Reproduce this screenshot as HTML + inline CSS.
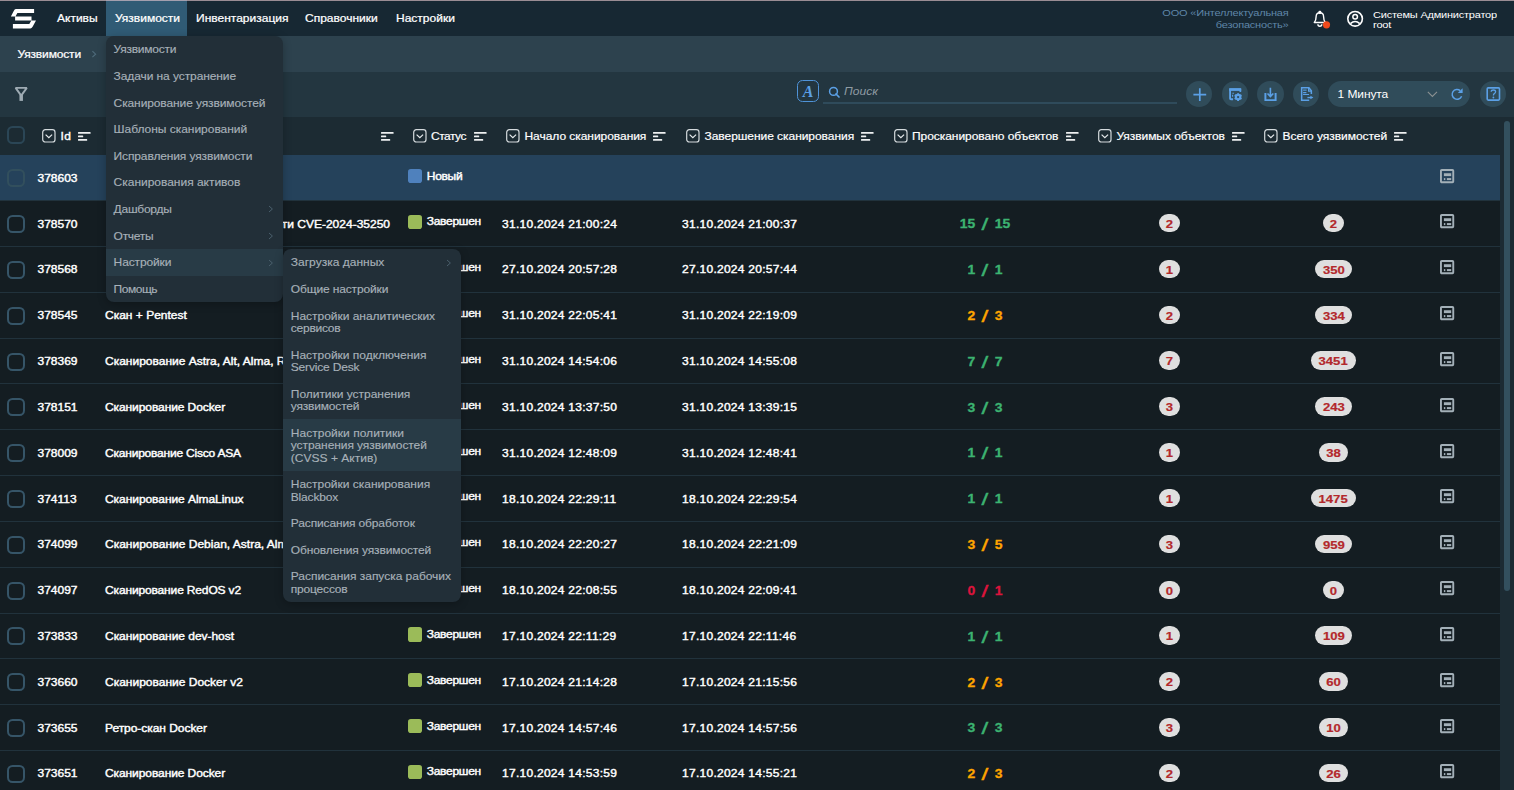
<!DOCTYPE html>
<html lang="ru"><head><meta charset="utf-8"><title>Сканирование уязвимостей</title>
<style>
*{box-sizing:border-box;margin:0;padding:0}
html,body{width:1514px;height:790px;overflow:hidden;background:#141d22;font-family:"Liberation Sans",sans-serif;color:#fff}
body{position:relative}
.abs{position:absolute}
#topline{position:absolute;left:0;top:0;width:1514px;height:1px;background:linear-gradient(to right,#9a8d94 0,#9a8d94 106px,#a39fae 106px,#a39fae 187px,#9a8d94 187px)}
#nav{position:absolute;left:0;top:1px;width:1514px;height:35px;background:#172833}
#nav .tab{position:absolute;top:0;height:35px;line-height:35px;font-size:12px;-webkit-text-stroke:.25px #fff;color:#fff;white-space:nowrap}
.t{display:inline-block;position:relative;top:1.2px;transform:scaleY(.84)}
#nav .act{background:#305b75}
#crumb{position:absolute;left:0;top:36px;width:1514px;height:36px;background:#2d424e}
#tool{position:absolute;left:0;top:72px;width:1514px;height:45px;background:#233640}
#thead{z-index:2;position:absolute;left:0;top:117px;width:1500px;height:38px;background:#1c2b33}
#sbtrack{position:absolute;left:1500px;top:117px;width:14px;height:673px;background:#1c2b33}
#sbthumb{position:absolute;left:1503.9px;top:120.9px;width:6.5px;height:469.8px;border-radius:3.3px;background:#33505e}
.hc{position:absolute;top:1px;height:38px;line-height:38px;font-size:12px;color:#fff;white-space:nowrap;-webkit-text-stroke:.2px;letter-spacing:-.05px;transform:scaleY(.84)}
.cb{position:absolute;left:7px;width:18px;height:18px;border:2px solid #365568;border-radius:5.5px}
.row{position:absolute;left:0;width:1500px;height:45.83px;border-top:1px solid #21323c;background:#141d22;font-size:12px;font-weight:normal;-webkit-text-stroke:0.45px}
.row.sel{background:#25425b;border-top-color:#25425b}
.row .cb{top:13.9px}
.row.sel .cb{border-color:#324f5d}
.row span{position:absolute;white-space:nowrap}
.row .id{left:37.5px;top:15.4px;line-height:16px;transform:scaleY(.84)}
.row .nm{left:105px;top:15.4px;line-height:16px;transform:scaleY(.84)}
.row .nmr{left:auto;right:1110px}
.row .sq{left:407.9px;top:13.8px;width:14.2px;height:14.2px;border-radius:2.8px;background:#9bbb59}
.row .sqn{background:#4f81bd}
.row .st{left:426.8px;top:13.3px;line-height:16px;letter-spacing:-.3px;transform:scaleY(.84)}
.row .d1{left:502px;top:15.4px;line-height:16px;letter-spacing:.27px;transform:scaleY(.84)}
.row .d2{left:682px;top:15.4px;line-height:16px;letter-spacing:.27px;transform:scaleY(.84)}
.row .ps{font-weight:bold;-webkit-text-stroke:.3px;left:884.8px;width:200px;text-align:center;top:14.2px;line-height:18px;font-size:13px;letter-spacing:0;word-spacing:3.7px;transform:scaleX(1.07)}
.g{color:#3cb371}.o{color:#ffa500}.r{color:#dc143c}
.row .bw{top:12.75px;height:19px;width:100px;text-align:center}
.row .b1{left:1119.5px}
.row .b2{left:1283.5px}
.row .bd{font-weight:bold;-webkit-text-stroke:.2px;position:static;display:inline-block;height:18.6px;width:21.8px;text-align:center;border-radius:10px;background:#dfdfdf;color:#b3282b;font-size:11.8px;line-height:20.6px;vertical-align:top}
.row .w2{width:29.6px}.row .w3{width:36.7px}.row .w4{width:44.2px}
.row .bd i{font-style:normal;display:inline-block;transform:scaleX(1.11)}
.row .ri{position:absolute;left:1439.1px;top:12.3px}
.menu{z-index:5;position:absolute;background:#222f38;color:#a7b1b8;font-size:12px;-webkit-text-stroke:.15px;box-shadow:0 2px 8px rgba(0,0,0,.25)}
.menu .it{position:relative;display:flex;flex-direction:column;justify-content:center;min-height:26.65px;padding:7px 8px 7px 7.6px;line-height:12.5px;white-space:nowrap}
.menu .it span{display:block;position:relative;top:1.2px;height:12.5px;transform:scaleY(.84)}
.menu .hov{background:#283b46}
.menu .chev{position:absolute;right:8.8px;top:9.6px}
.btn{top:8.6px;width:26.3px;height:26.3px;border-radius:13.2px;background:#304c5a}
.ln{display:block;transform:scaleY(.84)}
.row .ps b{display:inline-block;font-weight:normal;-webkit-text-stroke:.3px;transform:translateY(.6px) scale(1.75,1.33)}

</style></head>
<body>
<div id="topline"></div>
<div id="nav">
<svg class="abs" style="left:0;top:0" width="46" height="35" viewBox="0 0 46 35"><path d="M15.9 8.1 H34.1 V11.9 H17.4 L15.4 15.5 H10.9 L13.6 10.2 Q14.6 8.1 15.9 8.1 Z M15.1 15.5 H31.5 V19.6 H15.1 Z M12.9 22.9 H29.3 L31.4 19.6 H36 L32.6 25.8 Q31.6 27.5 30.3 27.5 H12.9 Z" fill="#fff"/></svg>
<div class="tab" style="left:57px"><span class="t">Активы</span></div>
<div class="tab act" style="left:106px;width:81px;padding-left:9px"><span class="t">Уязвимости</span></div>
<div class="tab" style="left:196px"><span class="t">Инвентаризация</span></div>
<div class="tab" style="left:305px"><span class="t">Справочники</span></div>
<div class="tab" style="left:396px"><span class="t">Настройки</span></div>
<div class="abs" style="right:225.5px;top:7px;text-align:right;font-size:11px;line-height:11.6px;color:#5f86a8;letter-spacing:-.2px;white-space:nowrap"><span class="ln">ООО «Интеллектуальная</span><span class="ln">безопасность»</span></div>
<svg class="abs" style="left:1305px;top:0" width="65" height="35" viewBox="0 0 65 35"><rect x="13.4" y="9.7" width="2.9" height="3.2" rx="1.2" fill="#fff"/><path d="M9.3 21.5 C10.7 20 11.1 18.6 11.1 15.8 C11.1 13.2 12.5 11.8 14.85 11.8 C17.2 11.8 18.6 13.2 18.6 15.8 C18.6 18.6 19 20 20.4 21.5 Z" fill="none" stroke="#fff" stroke-width="1.4" stroke-linejoin="round"/><path d="M12.9 23.3 A1.95 1.95 0 0 0 16.8 23.3" fill="none" stroke="#fff" stroke-width="1.4"/><circle cx="21.5" cy="23.8" r="3.6" fill="#f04a1c"/><circle cx="50.1" cy="17.8" r="7.3" fill="none" stroke="#fff" stroke-width="1.6"/><circle cx="50.15" cy="15.7" r="2.3" fill="none" stroke="#fff" stroke-width="1.5"/><path d="M45.4 22.7 Q50.1 18.3 54.8 22.7" fill="none" stroke="#fff" stroke-width="1.6"/></svg>
<div class="abs" style="left:1373px;top:8.5px;font-size:11px;line-height:10px;color:#fff;letter-spacing:-.22px;white-space:nowrap"><span class="ln">Системы Администратор</span><span class="ln">root</span></div>
</div>
<div id="crumb">
<div class="abs" style="left:17.5px;top:1px;line-height:36px;font-size:12px;color:#fff;letter-spacing:-.15px;-webkit-text-stroke:.25px #fff;transform:scaleY(.84)">Уязвимости</div>
<svg class="abs" style="left:91px;top:14px" width="6" height="9" viewBox="0 0 6 9"><path d="M1.4 1.2 L4.6 4.2 L1.4 7.2" fill="none" stroke="#4f6b7b" stroke-width="1.1"/></svg>
</div>
<div id="tool">
<svg class="abs" style="left:13px;top:14px" width="17" height="17" viewBox="0 0 17 17"><path d="M2.6 1.9 H13.8 L8.2 9.6 Z" fill="none" stroke="#9eabb3" stroke-width="1.9" stroke-linejoin="bevel"/><rect x="6.45" y="8.6" width="3.5" height="6.3" fill="#9eabb3"/></svg>
<div class="abs" style="left:797px;top:8px;width:22px;height:22px;border:1.6px solid #4f93d8;border-radius:5.5px;font-family:'Liberation Serif',serif;font-style:italic;font-weight:bold;font-size:16px;line-height:21.6px;text-align:center;color:#5ba0e6">A</div>
<svg class="abs" style="left:828px;top:14px" width="13" height="13" viewBox="0 0 13 13"><circle cx="5.5" cy="5.4" r="3.9" fill="none" stroke="#5ba0e6" stroke-width="1.5"/><path d="M8 8 L11 11" stroke="#5ba0e6" stroke-width="1.7" stroke-linecap="round"/></svg>
<div class="abs" style="left:844px;top:12px;font-size:12px;line-height:14px;font-style:italic;color:#8f9ba3;letter-spacing:.05px;transform:scaleY(.84);transform-origin:50% 78%">Поиск</div>
<div class="abs" style="left:823px;top:30px;width:354px;height:1.5px;background:#2f4b5b"></div>
<div class="abs btn" style="left:1186.2px"></div>
<div class="abs btn" style="left:1221.9px"></div>
<div class="abs btn" style="left:1257.4px"></div>
<div class="abs btn" style="left:1293px"></div>
<div class="abs" style="left:1328.3px;top:8.6px;width:141.5px;height:26.3px;border-radius:13.2px;background:#304c5a"></div>
<div class="abs btn" style="left:1479.6px"></div>

<svg class="abs" style="left:1186px;top:9px" width="27" height="27" viewBox="0 0 27 27"><path d="M7.4 13.6 H20.2 M13.8 7.2 V20" stroke="#5ba0e6" stroke-width="1.7" fill="none"/></svg>
<svg class="abs" style="left:1222px;top:9px" width="27" height="27" viewBox="0 0 27 27"><path d="M11.1 18.2 H8.9 Q8.1 18.2 8.1 17.4 V8" fill="none" stroke="#5ba0e6" stroke-width="1.9"/><path d="M7.15 8.5 H19.2" stroke="#5ba0e6" stroke-width="2.8"/><path d="M18.35 8 V11" stroke="#5ba0e6" stroke-width="1.7"/><path d="M10.4 12.2 h1.5 M10.6 13.8 v2" stroke="#5ba0e6" stroke-width="1.1"/><g transform="translate(16.1,16.1)"><circle r="2.3" fill="none" stroke="#5ba0e6" stroke-width="2"/><path d="M0 -3.9 V3.9 M-3.38 -1.95 L3.38 1.95 M-3.38 1.95 L3.38 -1.95" stroke="#5ba0e6" stroke-width="1.9"/><circle r="1.15" fill="#304c5a"/></g></svg>
<svg class="abs" style="left:1257px;top:9px" width="27" height="27" viewBox="0 0 27 27"><path d="M8.4 11.9 V19.1 H18.6 V11.9" fill="none" stroke="#5ba0e6" stroke-width="1.95"/><path d="M13.4 6.85 V15 M10.5 12.5 L13.4 15.5 L16.3 12.5" fill="none" stroke="#5ba0e6" stroke-width="1.6"/></svg>
<svg class="abs" style="left:1293px;top:9px" width="27" height="27" viewBox="0 0 27 27"><path d="M16.2 19.15 H8.65 V6.7 H15.9 L18.35 9.8 V12.9" fill="none" stroke="#5ba0e6" stroke-width="1.5" stroke-linejoin="miter"/><path d="M15.6 6.9 V10.2 H18.3" fill="none" stroke="#5ba0e6" stroke-width="1.2"/><path d="M10.1 8.4 h3.5 v1.5 h-3.5z" fill="#5ba0e6" opacity=".75"/><path d="M10.1 11.6 h3.3 M10.1 13.5 h5.9" stroke="#5ba0e6" stroke-width="1.1"/><path d="M14.4 16.57 H18" stroke="#5ba0e6" stroke-width="1.3"/><path d="M17.4 14.8 L20.4 16.57 L17.4 18.3 Z" fill="#5ba0e6"/></svg>
<svg class="abs" style="left:1426px;top:18.2px" width="13" height="9" viewBox="0 0 13 9"><path d="M1.8 1.8 L6.4 6.4 L11 1.8" fill="none" stroke="#8b9192" stroke-width="1.1"/></svg>
<svg class="abs" style="left:1449px;top:14.1px" width="16" height="16" viewBox="0 0 16 16"><path d="M11.2 4.6 A4.9 4.9 0 1 0 12.6 10.2" fill="none" stroke="#5ba0e6" stroke-width="1.5"/><path d="M13.6 2.2 V7 H8.8 Z" fill="#5ba0e6"/></svg>
<svg class="abs" style="left:1479.5px;top:9px" width="27" height="27" viewBox="0 0 27 27"><rect x="7.2" y="6.9" width="12.3" height="12.2" rx="1" fill="none" stroke="#5ba0e6" stroke-width="1.6"/><path d="M11.2 10.8 Q11.2 9 13.4 9 Q15.6 9 15.6 10.8 Q15.6 11.9 14.3 12.6 Q13.4 13.1 13.4 14.4" fill="none" stroke="#5ba0e6" stroke-width="1.3"/><circle cx="13.4" cy="16.5" r=".9" fill="#5ba0e6"/></svg>
<div class="abs" style="left:1337.6px;top:15.1px;font-size:12px;line-height:16px;color:#fff;letter-spacing:-.1px;transform:scaleY(.84)">1 Минута</div>
</div>
<div id="thead">
<span class="cb" style="top:9px;border-color:#2b4656"></span>
<svg class="abs" style="left:42px;top:12px" width="14" height="14" viewBox="0 0 14 14"><rect x="0.7" y="0.7" width="12.3" height="12.3" rx="2.6" fill="none" stroke="#d4dadd" stroke-width="1.2"/><path d="M3.6 5.6 L6.85 8.7 L10.1 5.6" fill="none" stroke="#e8ecee" stroke-width="1.2"/></svg>
<span class="hc" style="left:60.5px;-webkit-text-stroke:.4px #fff;letter-spacing:.4px">Id</span>
<svg class="abs" style="left:77.8px;top:13.8px" width="14" height="12" viewBox="0 0 14 12"><rect x="0" y="1" width="12.6" height="1.7" rx=".5" fill="#eef1f2"/><rect x="0" y="4.5" width="5.2" height="1.7" rx=".5" fill="#eef1f2"/><rect x="0" y="8" width="9.2" height="1.7" rx=".5" fill="#eef1f2"/></svg>
<svg class="abs" style="left:380.5px;top:13.8px" width="14" height="12" viewBox="0 0 14 12"><rect x="0" y="1" width="12.6" height="1.7" rx=".5" fill="#eef1f2"/><rect x="0" y="4.5" width="5.2" height="1.7" rx=".5" fill="#eef1f2"/><rect x="0" y="8" width="9.2" height="1.7" rx=".5" fill="#eef1f2"/></svg>
<svg class="abs" style="left:413px;top:12px" width="14" height="14" viewBox="0 0 14 14"><rect x="0.7" y="0.7" width="12.3" height="12.3" rx="2.6" fill="none" stroke="#d4dadd" stroke-width="1.2"/><path d="M3.6 5.6 L6.85 8.7 L10.1 5.6" fill="none" stroke="#e8ecee" stroke-width="1.2"/></svg>
<span class="hc" style="left:431px;letter-spacing:-.5px">Статус</span>
<svg class="abs" style="left:473.8px;top:13.8px" width="14" height="12" viewBox="0 0 14 12"><rect x="0" y="1" width="12.6" height="1.7" rx=".5" fill="#eef1f2"/><rect x="0" y="4.5" width="5.2" height="1.7" rx=".5" fill="#eef1f2"/><rect x="0" y="8" width="9.2" height="1.7" rx=".5" fill="#eef1f2"/></svg>
<svg class="abs" style="left:505.8px;top:12px" width="14" height="14" viewBox="0 0 14 14"><rect x="0.7" y="0.7" width="12.3" height="12.3" rx="2.6" fill="none" stroke="#d4dadd" stroke-width="1.2"/><path d="M3.6 5.6 L6.85 8.7 L10.1 5.6" fill="none" stroke="#e8ecee" stroke-width="1.2"/></svg>
<span class="hc" style="left:524.5px;">Начало сканирования</span>
<svg class="abs" style="left:653.3px;top:13.8px" width="14" height="12" viewBox="0 0 14 12"><rect x="0" y="1" width="12.6" height="1.7" rx=".5" fill="#eef1f2"/><rect x="0" y="4.5" width="5.2" height="1.7" rx=".5" fill="#eef1f2"/><rect x="0" y="8" width="9.2" height="1.7" rx=".5" fill="#eef1f2"/></svg>
<svg class="abs" style="left:686px;top:12px" width="14" height="14" viewBox="0 0 14 14"><rect x="0.7" y="0.7" width="12.3" height="12.3" rx="2.6" fill="none" stroke="#d4dadd" stroke-width="1.2"/><path d="M3.6 5.6 L6.85 8.7 L10.1 5.6" fill="none" stroke="#e8ecee" stroke-width="1.2"/></svg>
<span class="hc" style="left:704.5px;">Завершение сканирования</span>
<svg class="abs" style="left:860.7px;top:13.8px" width="14" height="12" viewBox="0 0 14 12"><rect x="0" y="1" width="12.6" height="1.7" rx=".5" fill="#eef1f2"/><rect x="0" y="4.5" width="5.2" height="1.7" rx=".5" fill="#eef1f2"/><rect x="0" y="8" width="9.2" height="1.7" rx=".5" fill="#eef1f2"/></svg>
<svg class="abs" style="left:893.5px;top:12px" width="14" height="14" viewBox="0 0 14 14"><rect x="0.7" y="0.7" width="12.3" height="12.3" rx="2.6" fill="none" stroke="#d4dadd" stroke-width="1.2"/><path d="M3.6 5.6 L6.85 8.7 L10.1 5.6" fill="none" stroke="#e8ecee" stroke-width="1.2"/></svg>
<span class="hc" style="left:912px;">Просканировано объектов</span>
<svg class="abs" style="left:1066px;top:13.8px" width="14" height="12" viewBox="0 0 14 12"><rect x="0" y="1" width="12.6" height="1.7" rx=".5" fill="#eef1f2"/><rect x="0" y="4.5" width="5.2" height="1.7" rx=".5" fill="#eef1f2"/><rect x="0" y="8" width="9.2" height="1.7" rx=".5" fill="#eef1f2"/></svg>
<svg class="abs" style="left:1098px;top:12px" width="14" height="14" viewBox="0 0 14 14"><rect x="0.7" y="0.7" width="12.3" height="12.3" rx="2.6" fill="none" stroke="#d4dadd" stroke-width="1.2"/><path d="M3.6 5.6 L6.85 8.7 L10.1 5.6" fill="none" stroke="#e8ecee" stroke-width="1.2"/></svg>
<span class="hc" style="left:1116.5px;">Уязвимых объектов</span>
<svg class="abs" style="left:1231.5px;top:13.8px" width="14" height="12" viewBox="0 0 14 12"><rect x="0" y="1" width="12.6" height="1.7" rx=".5" fill="#eef1f2"/><rect x="0" y="4.5" width="5.2" height="1.7" rx=".5" fill="#eef1f2"/><rect x="0" y="8" width="9.2" height="1.7" rx=".5" fill="#eef1f2"/></svg>
<svg class="abs" style="left:1264px;top:12px" width="14" height="14" viewBox="0 0 14 14"><rect x="0.7" y="0.7" width="12.3" height="12.3" rx="2.6" fill="none" stroke="#d4dadd" stroke-width="1.2"/><path d="M3.6 5.6 L6.85 8.7 L10.1 5.6" fill="none" stroke="#e8ecee" stroke-width="1.2"/></svg>
<span class="hc" style="left:1282.5px;">Всего уязвимостей</span>
<svg class="abs" style="left:1394.3px;top:13.8px" width="14" height="12" viewBox="0 0 14 12"><rect x="0" y="1" width="12.6" height="1.7" rx=".5" fill="#eef1f2"/><rect x="0" y="4.5" width="5.2" height="1.7" rx=".5" fill="#eef1f2"/><rect x="0" y="8" width="9.2" height="1.7" rx=".5" fill="#eef1f2"/></svg>
</div>
<div id="sbtrack"></div><div id="sbthumb"></div>
<div id="rows">
<div class="row sel" style="top:154.30px"><span class="cb"></span><span class="id">378603</span><span class="sq sqn"></span><span class="st">Новый</span><svg class="ri" width="16" height="16" viewBox="-0.6 -0.6 16 16"><rect x="1.35" y="1.35" width="12.3" height="12.3" rx=".8" fill="none" stroke="#a3b0b8" stroke-width="1.9"/><rect x="4.3" y="4.65" width="7.3" height="2.85" fill="#a3b0b8"/><rect x="4.3" y="9.5" width="1.4" height="2" fill="#a3b0b8"/><rect x="7.3" y="9.5" width="4.3" height="2" fill="#a3b0b8"/></svg></div>
<div class="row" style="top:200.13px"><span class="cb"></span><span class="id">378570</span><span class="nm nmr">ти CVE-2024-35250</span><span class="sq"></span><span class="st">Завершен</span><span class="d1">31.10.2024 21:00:24</span><span class="d2">31.10.2024 21:00:37</span><span class="ps g">15 <b>/</b> 15</span><span class="bw b1"><span class="bd w1"><i>2</i></span></span><span class="bw b2"><span class="bd w1"><i>2</i></span></span><svg class="ri" width="16" height="16" viewBox="-0.6 -0.6 16 16"><rect x="1.35" y="1.35" width="12.3" height="12.3" rx=".8" fill="none" stroke="#a3b0b8" stroke-width="1.9"/><rect x="4.3" y="4.65" width="7.3" height="2.85" fill="#a3b0b8"/><rect x="4.3" y="9.5" width="1.4" height="2" fill="#a3b0b8"/><rect x="7.3" y="9.5" width="4.3" height="2" fill="#a3b0b8"/></svg></div>
<div class="row" style="top:245.96px"><span class="cb"></span><span class="id">378568</span><span class="sq"></span><span class="st">Завершен</span><span class="d1">27.10.2024 20:57:28</span><span class="d2">27.10.2024 20:57:44</span><span class="ps g">1 <b>/</b> 1</span><span class="bw b1"><span class="bd w1"><i>1</i></span></span><span class="bw b2"><span class="bd w3"><i>350</i></span></span><svg class="ri" width="16" height="16" viewBox="-0.6 -0.6 16 16"><rect x="1.35" y="1.35" width="12.3" height="12.3" rx=".8" fill="none" stroke="#a3b0b8" stroke-width="1.9"/><rect x="4.3" y="4.65" width="7.3" height="2.85" fill="#a3b0b8"/><rect x="4.3" y="9.5" width="1.4" height="2" fill="#a3b0b8"/><rect x="7.3" y="9.5" width="4.3" height="2" fill="#a3b0b8"/></svg></div>
<div class="row" style="top:291.79px"><span class="cb"></span><span class="id">378545</span><span class="nm">Скан + Pentest</span><span class="sq"></span><span class="st">Завершен</span><span class="d1">31.10.2024 22:05:41</span><span class="d2">31.10.2024 22:19:09</span><span class="ps o">2 <b>/</b> 3</span><span class="bw b1"><span class="bd w1"><i>2</i></span></span><span class="bw b2"><span class="bd w3"><i>334</i></span></span><svg class="ri" width="16" height="16" viewBox="-0.6 -0.6 16 16"><rect x="1.35" y="1.35" width="12.3" height="12.3" rx=".8" fill="none" stroke="#a3b0b8" stroke-width="1.9"/><rect x="4.3" y="4.65" width="7.3" height="2.85" fill="#a3b0b8"/><rect x="4.3" y="9.5" width="1.4" height="2" fill="#a3b0b8"/><rect x="7.3" y="9.5" width="4.3" height="2" fill="#a3b0b8"/></svg></div>
<div class="row" style="top:337.62px"><span class="cb"></span><span class="id">378369</span><span class="nm">Сканирование Astra, Alt, Alma, RedOS</span><span class="sq"></span><span class="st">Завершен</span><span class="d1">31.10.2024 14:54:06</span><span class="d2">31.10.2024 14:55:08</span><span class="ps g">7 <b>/</b> 7</span><span class="bw b1"><span class="bd w1"><i>7</i></span></span><span class="bw b2"><span class="bd w4"><i>3451</i></span></span><svg class="ri" width="16" height="16" viewBox="-0.6 -0.6 16 16"><rect x="1.35" y="1.35" width="12.3" height="12.3" rx=".8" fill="none" stroke="#a3b0b8" stroke-width="1.9"/><rect x="4.3" y="4.65" width="7.3" height="2.85" fill="#a3b0b8"/><rect x="4.3" y="9.5" width="1.4" height="2" fill="#a3b0b8"/><rect x="7.3" y="9.5" width="4.3" height="2" fill="#a3b0b8"/></svg></div>
<div class="row" style="top:383.45px"><span class="cb"></span><span class="id">378151</span><span class="nm" style="letter-spacing:-0.09px">Сканирование Docker</span><span class="sq"></span><span class="st">Завершен</span><span class="d1">31.10.2024 13:37:50</span><span class="d2">31.10.2024 13:39:15</span><span class="ps g">3 <b>/</b> 3</span><span class="bw b1"><span class="bd w1"><i>3</i></span></span><span class="bw b2"><span class="bd w3"><i>243</i></span></span><svg class="ri" width="16" height="16" viewBox="-0.6 -0.6 16 16"><rect x="1.35" y="1.35" width="12.3" height="12.3" rx=".8" fill="none" stroke="#a3b0b8" stroke-width="1.9"/><rect x="4.3" y="4.65" width="7.3" height="2.85" fill="#a3b0b8"/><rect x="4.3" y="9.5" width="1.4" height="2" fill="#a3b0b8"/><rect x="7.3" y="9.5" width="4.3" height="2" fill="#a3b0b8"/></svg></div>
<div class="row" style="top:429.28px"><span class="cb"></span><span class="id">378009</span><span class="nm" style="letter-spacing:-0.21px">Сканирование Cisco ASA</span><span class="sq"></span><span class="st">Завершен</span><span class="d1">31.10.2024 12:48:09</span><span class="d2">31.10.2024 12:48:41</span><span class="ps g">1 <b>/</b> 1</span><span class="bw b1"><span class="bd w1"><i>1</i></span></span><span class="bw b2"><span class="bd w2"><i>38</i></span></span><svg class="ri" width="16" height="16" viewBox="-0.6 -0.6 16 16"><rect x="1.35" y="1.35" width="12.3" height="12.3" rx=".8" fill="none" stroke="#a3b0b8" stroke-width="1.9"/><rect x="4.3" y="4.65" width="7.3" height="2.85" fill="#a3b0b8"/><rect x="4.3" y="9.5" width="1.4" height="2" fill="#a3b0b8"/><rect x="7.3" y="9.5" width="4.3" height="2" fill="#a3b0b8"/></svg></div>
<div class="row" style="top:475.11px"><span class="cb"></span><span class="id">374113</span><span class="nm" style="letter-spacing:-0.06px">Сканирование AlmaLinux</span><span class="sq"></span><span class="st">Завершен</span><span class="d1">18.10.2024 22:29:11</span><span class="d2">18.10.2024 22:29:54</span><span class="ps g">1 <b>/</b> 1</span><span class="bw b1"><span class="bd w1"><i>1</i></span></span><span class="bw b2"><span class="bd w4"><i>1475</i></span></span><svg class="ri" width="16" height="16" viewBox="-0.6 -0.6 16 16"><rect x="1.35" y="1.35" width="12.3" height="12.3" rx=".8" fill="none" stroke="#a3b0b8" stroke-width="1.9"/><rect x="4.3" y="4.65" width="7.3" height="2.85" fill="#a3b0b8"/><rect x="4.3" y="9.5" width="1.4" height="2" fill="#a3b0b8"/><rect x="7.3" y="9.5" width="4.3" height="2" fill="#a3b0b8"/></svg></div>
<div class="row" style="top:520.94px"><span class="cb"></span><span class="id">374099</span><span class="nm">Сканирование Debian, Astra, Alma</span><span class="sq"></span><span class="st">Завершен</span><span class="d1">18.10.2024 22:20:27</span><span class="d2">18.10.2024 22:21:09</span><span class="ps o">3 <b>/</b> 5</span><span class="bw b1"><span class="bd w1"><i>3</i></span></span><span class="bw b2"><span class="bd w3"><i>959</i></span></span><svg class="ri" width="16" height="16" viewBox="-0.6 -0.6 16 16"><rect x="1.35" y="1.35" width="12.3" height="12.3" rx=".8" fill="none" stroke="#a3b0b8" stroke-width="1.9"/><rect x="4.3" y="4.65" width="7.3" height="2.85" fill="#a3b0b8"/><rect x="4.3" y="9.5" width="1.4" height="2" fill="#a3b0b8"/><rect x="7.3" y="9.5" width="4.3" height="2" fill="#a3b0b8"/></svg></div>
<div class="row" style="top:566.77px"><span class="cb"></span><span class="id">374097</span><span class="nm" style="letter-spacing:-0.15px">Сканирование RedOS v2</span><span class="sq"></span><span class="st">Завершен</span><span class="d1">18.10.2024 22:08:55</span><span class="d2">18.10.2024 22:09:41</span><span class="ps r">0 <b>/</b> 1</span><span class="bw b1"><span class="bd w1"><i>0</i></span></span><span class="bw b2"><span class="bd w1"><i>0</i></span></span><svg class="ri" width="16" height="16" viewBox="-0.6 -0.6 16 16"><rect x="1.35" y="1.35" width="12.3" height="12.3" rx=".8" fill="none" stroke="#a3b0b8" stroke-width="1.9"/><rect x="4.3" y="4.65" width="7.3" height="2.85" fill="#a3b0b8"/><rect x="4.3" y="9.5" width="1.4" height="2" fill="#a3b0b8"/><rect x="7.3" y="9.5" width="4.3" height="2" fill="#a3b0b8"/></svg></div>
<div class="row" style="top:612.60px"><span class="cb"></span><span class="id">373833</span><span class="nm" style="letter-spacing:-0.04px">Сканирование dev-host</span><span class="sq"></span><span class="st">Завершен</span><span class="d1">17.10.2024 22:11:29</span><span class="d2">17.10.2024 22:11:46</span><span class="ps g">1 <b>/</b> 1</span><span class="bw b1"><span class="bd w1"><i>1</i></span></span><span class="bw b2"><span class="bd w3"><i>109</i></span></span><svg class="ri" width="16" height="16" viewBox="-0.6 -0.6 16 16"><rect x="1.35" y="1.35" width="12.3" height="12.3" rx=".8" fill="none" stroke="#a3b0b8" stroke-width="1.9"/><rect x="4.3" y="4.65" width="7.3" height="2.85" fill="#a3b0b8"/><rect x="4.3" y="9.5" width="1.4" height="2" fill="#a3b0b8"/><rect x="7.3" y="9.5" width="4.3" height="2" fill="#a3b0b8"/></svg></div>
<div class="row" style="top:658.43px"><span class="cb"></span><span class="id">373660</span><span class="nm">Сканирование Docker v2</span><span class="sq"></span><span class="st">Завершен</span><span class="d1">17.10.2024 21:14:28</span><span class="d2">17.10.2024 21:15:56</span><span class="ps o">2 <b>/</b> 3</span><span class="bw b1"><span class="bd w1"><i>2</i></span></span><span class="bw b2"><span class="bd w2"><i>60</i></span></span><svg class="ri" width="16" height="16" viewBox="-0.6 -0.6 16 16"><rect x="1.35" y="1.35" width="12.3" height="12.3" rx=".8" fill="none" stroke="#a3b0b8" stroke-width="1.9"/><rect x="4.3" y="4.65" width="7.3" height="2.85" fill="#a3b0b8"/><rect x="4.3" y="9.5" width="1.4" height="2" fill="#a3b0b8"/><rect x="7.3" y="9.5" width="4.3" height="2" fill="#a3b0b8"/></svg></div>
<div class="row" style="top:704.26px"><span class="cb"></span><span class="id">373655</span><span class="nm" style="letter-spacing:-0.05px">Ретро-скан Docker</span><span class="sq"></span><span class="st">Завершен</span><span class="d1">17.10.2024 14:57:46</span><span class="d2">17.10.2024 14:57:56</span><span class="ps g">3 <b>/</b> 3</span><span class="bw b1"><span class="bd w1"><i>3</i></span></span><span class="bw b2"><span class="bd w2"><i>10</i></span></span><svg class="ri" width="16" height="16" viewBox="-0.6 -0.6 16 16"><rect x="1.35" y="1.35" width="12.3" height="12.3" rx=".8" fill="none" stroke="#a3b0b8" stroke-width="1.9"/><rect x="4.3" y="4.65" width="7.3" height="2.85" fill="#a3b0b8"/><rect x="4.3" y="9.5" width="1.4" height="2" fill="#a3b0b8"/><rect x="7.3" y="9.5" width="4.3" height="2" fill="#a3b0b8"/></svg></div>
<div class="row" style="top:750.09px"><span class="cb"></span><span class="id">373651</span><span class="nm" style="letter-spacing:-0.09px">Сканирование Docker</span><span class="sq"></span><span class="st">Завершен</span><span class="d1">17.10.2024 14:53:59</span><span class="d2">17.10.2024 14:55:21</span><span class="ps o">2 <b>/</b> 3</span><span class="bw b1"><span class="bd w1"><i>2</i></span></span><span class="bw b2"><span class="bd w2"><i>26</i></span></span><svg class="ri" width="16" height="16" viewBox="-0.6 -0.6 16 16"><rect x="1.35" y="1.35" width="12.3" height="12.3" rx=".8" fill="none" stroke="#a3b0b8" stroke-width="1.9"/><rect x="4.3" y="4.65" width="7.3" height="2.85" fill="#a3b0b8"/><rect x="4.3" y="9.5" width="1.4" height="2" fill="#a3b0b8"/><rect x="7.3" y="9.5" width="4.3" height="2" fill="#a3b0b8"/></svg></div>
</div>
<div class="menu" style="left:106px;top:36px;width:176.6px;border-radius:8px;overflow:hidden">
<div class="it"><span style="letter-spacing:-0.25px">Уязвимости</span></div>
<div class="it"><span style="letter-spacing:-0.09px">Задачи на устранение</span></div>
<div class="it"><span style="letter-spacing:-0.11px">Сканирование уязвимостей</span></div>
<div class="it"><span style="letter-spacing:-0.03px">Шаблоны сканирований</span></div>
<div class="it"><span style="letter-spacing:-0.13px">Исправления уязвимости</span></div>
<div class="it"><span style="letter-spacing:-0.02px">Сканирования активов</span></div>
<div class="it"><span style="letter-spacing:-0.24px">Дашборды</span><svg class="chev" width="6" height="8" viewBox="0 0 6 8"><path d="M1 1 L4.4 4 L1 7" fill="none" stroke="#4b606c" stroke-width="1"/></svg></div>
<div class="it"><span style="letter-spacing:-0.29px">Отчеты</span><svg class="chev" width="6" height="8" viewBox="0 0 6 8"><path d="M1 1 L4.4 4 L1 7" fill="none" stroke="#4b606c" stroke-width="1"/></svg></div>
<div class="it hov"><span style="letter-spacing:-0.13px">Настройки</span><svg class="chev" width="6" height="8" viewBox="0 0 6 8"><path d="M1 1 L4.4 4 L1 7" fill="none" stroke="#4b606c" stroke-width="1"/></svg></div>
<div class="it"><span style="letter-spacing:-0.48px">Помощь</span></div>
</div>
<div class="menu" style="left:283.2px;top:249.1px;width:177.4px;border-radius:8px;overflow:hidden">
<div class="it"><span style="letter-spacing:0.01px">Загрузка данных</span><svg class="chev" width="6" height="8" viewBox="0 0 6 8"><path d="M1 1 L4.4 4 L1 7" fill="none" stroke="#4b606c" stroke-width="1"/></svg></div>
<div class="it"><span style="letter-spacing:-0.14px">Общие настройки</span></div>
<div class="it"><span style="letter-spacing:-0.03px">Настройки аналитических</span><span style="letter-spacing:-0.25px">сервисов</span></div>
<div class="it"><span style="letter-spacing:-0.01px">Настройки подключения</span><span style="letter-spacing:-0.18px">Service Desk</span></div>
<div class="it"><span style="letter-spacing:-0.03px">Политики устранения</span><span style="letter-spacing:-0.19px">уязвимостей</span></div>
<div class="it hov"><span style="letter-spacing:0.02px">Настройки политики</span><span style="letter-spacing:-0.08px">устранения уязвимостей</span><span style="letter-spacing:0.02px">(CVSS + Актив)</span></div>
<div class="it"><span style="letter-spacing:-0.02px">Настройки сканирования</span><span style="letter-spacing:-0.17px">Blackbox</span></div>
<div class="it"><span style="letter-spacing:-0.14px">Расписания обработок</span></div>
<div class="it"><span style="letter-spacing:-0.12px">Обновления уязвимостей</span></div>
<div class="it"><span style="letter-spacing:-0.03px">Расписания запуска рабочих</span><span style="letter-spacing:-0.19px">процессов</span></div>
</div>
</body></html>
